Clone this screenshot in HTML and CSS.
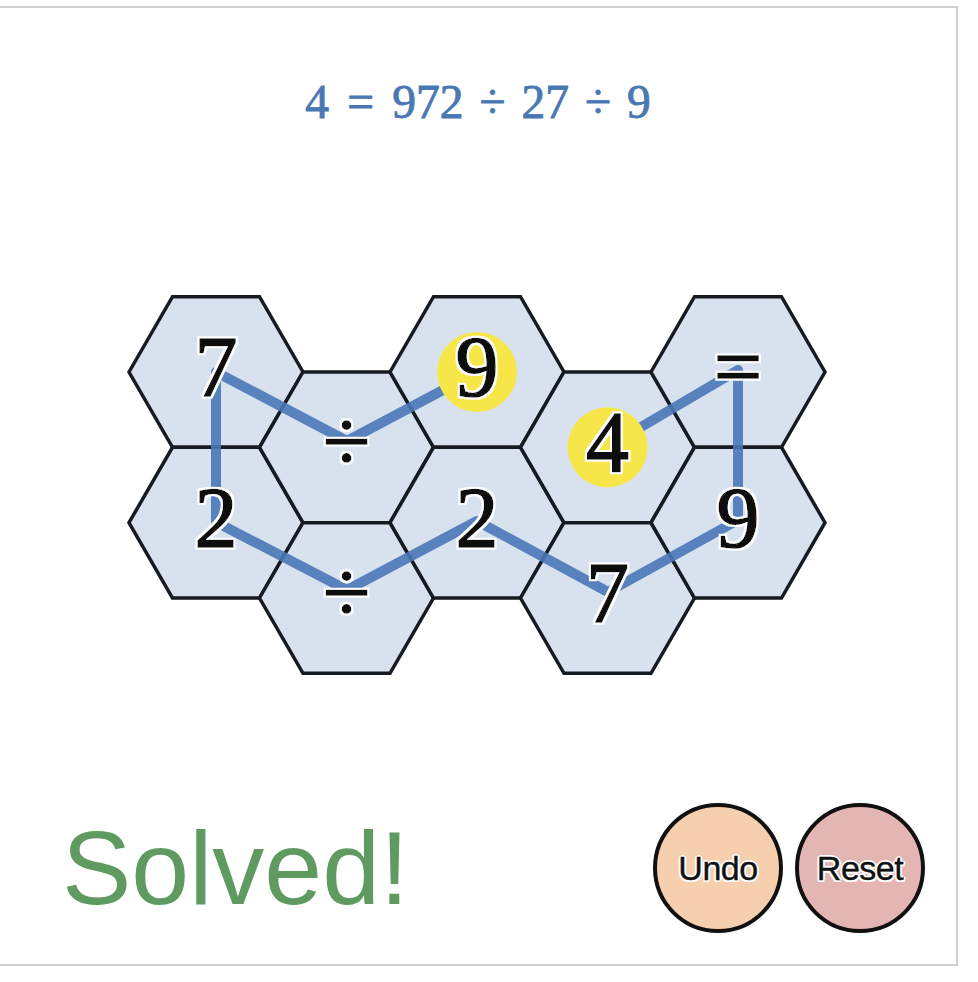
FILE: index.html
```html
<!DOCTYPE html>
<html>
<head>
<meta charset="utf-8">
<title>Hex equation puzzle</title>
<link rel="stylesheet" href="styles.css">
</head>
<body>
<div class="frame">
  <div class="equation"><span>4</span><span class="rel">=</span><span>972</span><span class="bin">÷</span><span>27</span><span class="bin">÷</span><span>9</span></div>
  <svg class="board" width="956" height="400" viewBox="0 290 956 400" xmlns="http://www.w3.org/2000/svg">
    <defs>
      <polygon id="hex" points="-87,0 -43.5,-75.35 43.5,-75.35 87,0 43.5,75.35 -43.5,75.35"/>
      <filter id="halo" x="-20%" y="-20%" width="140%" height="140%">
        <feMorphology in="SourceAlpha" operator="dilate" radius="2.2" result="grown"/>
        <feFlood flood-color="#ffffff" result="white"/>
        <feComposite in="white" in2="grown" operator="in" result="outline"/>
        <feMerge>
          <feMergeNode in="outline"/>
          <feMergeNode in="SourceGraphic"/>
        </feMerge>
      </filter>
    </defs>
    <g class="hexes">
      <use href="#hex" x="216" y="372"/>
      <use href="#hex" x="216" y="522.7"/>
      <use href="#hex" x="346.5" y="447.35"/>
      <use href="#hex" x="346.5" y="598"/>
      <use href="#hex" x="477" y="372"/>
      <use href="#hex" x="477" y="522.7"/>
      <use href="#hex" x="607.5" y="447.35"/>
      <use href="#hex" x="607.5" y="598"/>
      <use href="#hex" x="738" y="372"/>
      <use href="#hex" x="738" y="522.7"/>
    </g>
    <polyline class="path" points="477,372 347,441 216,372 216,522 347,590 477,521 608,592 738,520 738,370 607,447"/>
    <circle class="mark" cx="477" cy="372" r="40"/>
    <circle class="mark" cx="607.5" cy="447.35" r="40"/>
    <g class="cell-text" filter="url(#halo)">
      <text x="216" y="396">7</text>
      <text x="216" y="547">2</text>
      <text x="346.5" y="471">÷</text>
      <text x="346.5" y="622">÷</text>
      <text x="477" y="396">9</text>
      <text x="477" y="547">2</text>
      <text x="607.5" y="471">4</text>
      <text x="607.5" y="622">7</text>
      <text x="738" y="396">=</text>
      <text x="738" y="547">9</text>
    </g>
  </svg>
  <div class="footer">
    <div class="status">Solved!</div>
    <div class="buttons">
      <button class="btn undo">Undo</button>
      <button class="btn reset">Reset</button>
    </div>
  </div>
</div>
</body>
</html>
```
FILE: styles.css
```css
html, body {
  margin: 0;
  padding: 0;
  background: #ffffff;
}

.frame {
  box-sizing: border-box;
  width: 960px;
  height: 960px;
  margin: 6px 0 0 -2px;
  border: 2px solid #cfcfcf;
  display: flex;
  flex-direction: column;
}

.equation {
  margin-top: 64px;
  height: 60px;
  line-height: 60px;
  text-align: center;
  font-family: "Liberation Serif", "DejaVu Serif", serif;
  font-size: 47.5px;
  color: #4a78b5;
  -webkit-text-stroke: 0.9px #4a78b5;
  white-space: nowrap;
}

.equation .rel {
  display: inline-block;
  width: 0.778em;
  margin: 0 0.2778em;
  text-align: center;
}

.equation .bin {
  display: inline-block;
  width: 0.778em;
  margin: 0 0.2222em;
  text-align: center;
}

.board {
  display: block;
  margin-top: 158px;
}

.hexes {
  fill: #d8e2ef;
  stroke: #161b22;
  stroke-width: 3.5;
  stroke-linejoin: miter;
}

.path {
  fill: none;
  stroke: #4a78b7;
  stroke-width: 10;
  stroke-linejoin: round;
  opacity: 0.9;
}

.mark {
  fill: #f7e64a;
}

.cell-text {
  font-family: "Liberation Serif", "DejaVu Serif", serif;
  font-size: 86px;
  fill: #111111;
  stroke: #111111;
  stroke-width: 1.6;
  text-anchor: middle;
}

.footer {
  margin-top: 108px;
  height: 140px;
  display: flex;
  align-items: center;
  justify-content: space-between;
  padding: 0 31px 0 62px;
}

.status {
  font-family: "Liberation Sans", Arial, sans-serif;
  font-size: 104px;
  line-height: 104px;
  color: #5f9b61;
}

.buttons {
  display: flex;
  gap: 12px;
}

.btn {
  box-sizing: border-box;
  width: 130px;
  height: 130px;
  padding: 0;
  border: 4.5px solid #111111;
  border-radius: 50%;
  font-family: "Liberation Sans", Arial, sans-serif;
  font-size: 34px;
  letter-spacing: -0.5px;
  color: #111111;
  -webkit-text-stroke: 0.4px #111111;
  text-shadow:
    -2px 0 #fff, 2px 0 #fff, 0 -2px #fff, 0 2px #fff,
    -1.5px -1.5px #fff, 1.5px -1.5px #fff, -1.5px 1.5px #fff, 1.5px 1.5px #fff;
  cursor: pointer;
}

.undo {
  background: #f6cfae;
}

.reset {
  background: #e3b6b4;
}
```
